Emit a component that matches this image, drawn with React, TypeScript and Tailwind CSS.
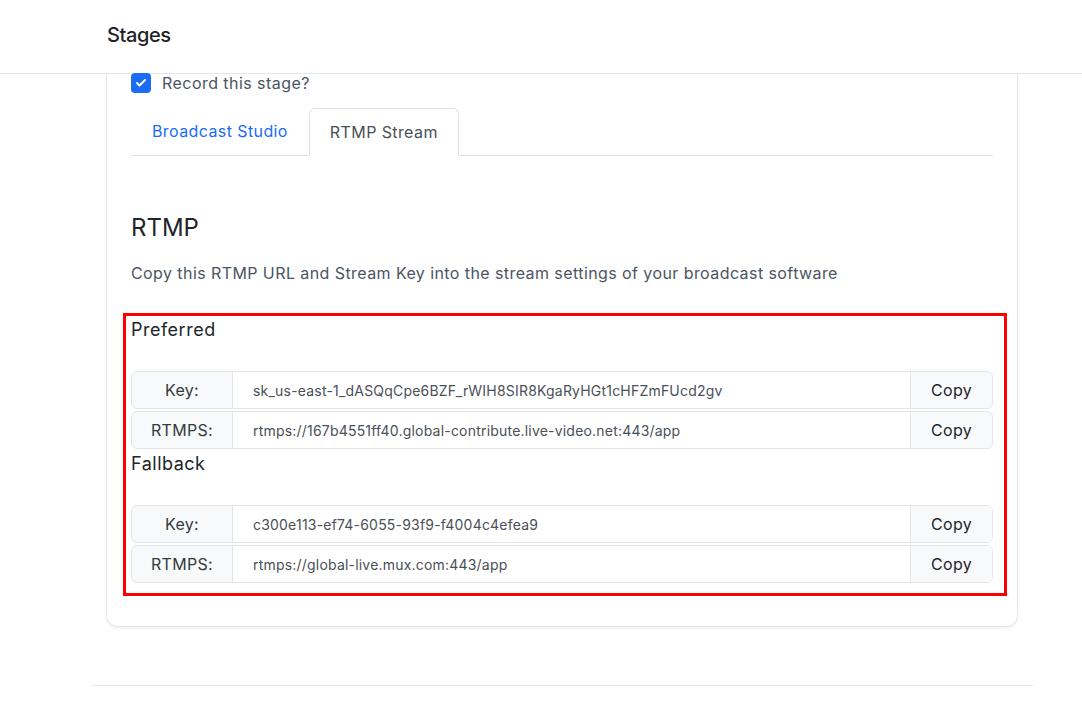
import { Check } from "lucide-react";

type Row = { label: string; value: string };

const preferred: Row[] = [
  { label: "Key:", value: "sk_us-east-1_dASQqCpe6BZF_rWIH8SIR8KgaRyHGt1cHFZmFUcd2gv" },
  { label: "RTMPS:", value: "rtmps://167b4551ff40.global-contribute.live-video.net:443/app" },
];

const fallback: Row[] = [
  { label: "Key:", value: "c300e113-ef74-6055-93f9-f4004c4efea9" },
  { label: "RTMPS:", value: "rtmps://global-live.mux.com:443/app" },
];

function CopyRow({ label, value }: Row) {
  return (
    <div className="flex h-[38px] items-stretch rounded-md border border-[#e3e5e9] text-[16px] tracking-[0.3px]">
      <div className="flex w-[101px] shrink-0 items-center justify-center rounded-l-md border-r border-[#e3e5e9] bg-[#f8f9fa] text-[#343a40]">
        {label}
      </div>
      <div className="flex flex-1 items-center px-5 text-[14px] tracking-[0.2px] text-[#495057]">{value}</div>
      <button className="flex w-[82px] shrink-0 items-center justify-center rounded-r-md border-l border-[#e3e5e9] bg-[#f8f9fa] text-[#212529]">
        Copy
      </button>
    </div>
  );
}

function KeyGroup({ title, rows }: { title: string; rows: Row[] }) {
  return (
    <div>
      <div className="mb-7 text-[18px] leading-[27px] tracking-[0.5px] text-[#212529]">{title}</div>
      <div className="flex flex-col gap-[2px]">
        {rows.map((r) => (
          <CopyRow key={r.label} {...r} />
        ))}
      </div>
    </div>
  );
}

export default function App() {
  return (
    <div className="min-h-[710px] bg-white font-['Inter',sans-serif]">
      <header className="flex h-[74px] items-center border-b border-[#e5e7eb] pl-[107px]">
        <h1 className="-mt-[3px] text-[20px] font-medium tracking-[-0.4px] text-[#1f2328]">Stages</h1>
      </header>

      <div className="ml-[106px] w-[912px] rounded-b-xl border-x border-b border-[#e5e7eb] px-6 pb-[43px] shadow-[0_2px_3px_rgba(0,0,0,0.05)]">
        <label className="-mt-px flex h-5 items-center gap-[11px] text-[16px] tracking-[0.45px] text-[#4b5563]">
          <span className="flex size-5 items-center justify-center rounded-[4px] bg-[#1a6cf5]">
            <Check className="size-3 text-white" strokeWidth={4} />
          </span>
          Record this stage?
        </label>

        <div className="mt-[15px] flex border-b border-[#dee2e6] text-[16px] tracking-[0.4px]">
          <div className="px-[21px] py-[11px] text-[#1a6cf5]">Broadcast Studio</div>
          <div className="-mb-px rounded-t-md border border-[#dee2e6] border-b-white bg-white px-5 py-[11px] text-[#495057]">
            RTMP Stream
          </div>
        </div>

        <h2 className="mt-[56px] text-[24px] leading-8 text-[#212529]">RTMP</h2>
        <p className="mt-[17px] text-[16px] leading-6 tracking-[0.42px] text-[#4b5563]">
          Copy this RTMP URL and Stream Key into the stream settings of your broadcast software
        </p>

        <div className="relative mt-[31px]">
          <KeyGroup title="Preferred" rows={preferred} />
          <div className="mt-px">
            <KeyGroup title="Fallback" rows={fallback} />
          </div>
          <div className="pointer-events-none absolute -bottom-[13px] -left-2 -right-[14px] -top-[3px] border-[3px] border-[#ff0000]" />
        </div>
      </div>

      <div className="ml-[92px] mt-[58px] h-px w-[941px] bg-[#e5e7eb]" />
    </div>
  );
}
